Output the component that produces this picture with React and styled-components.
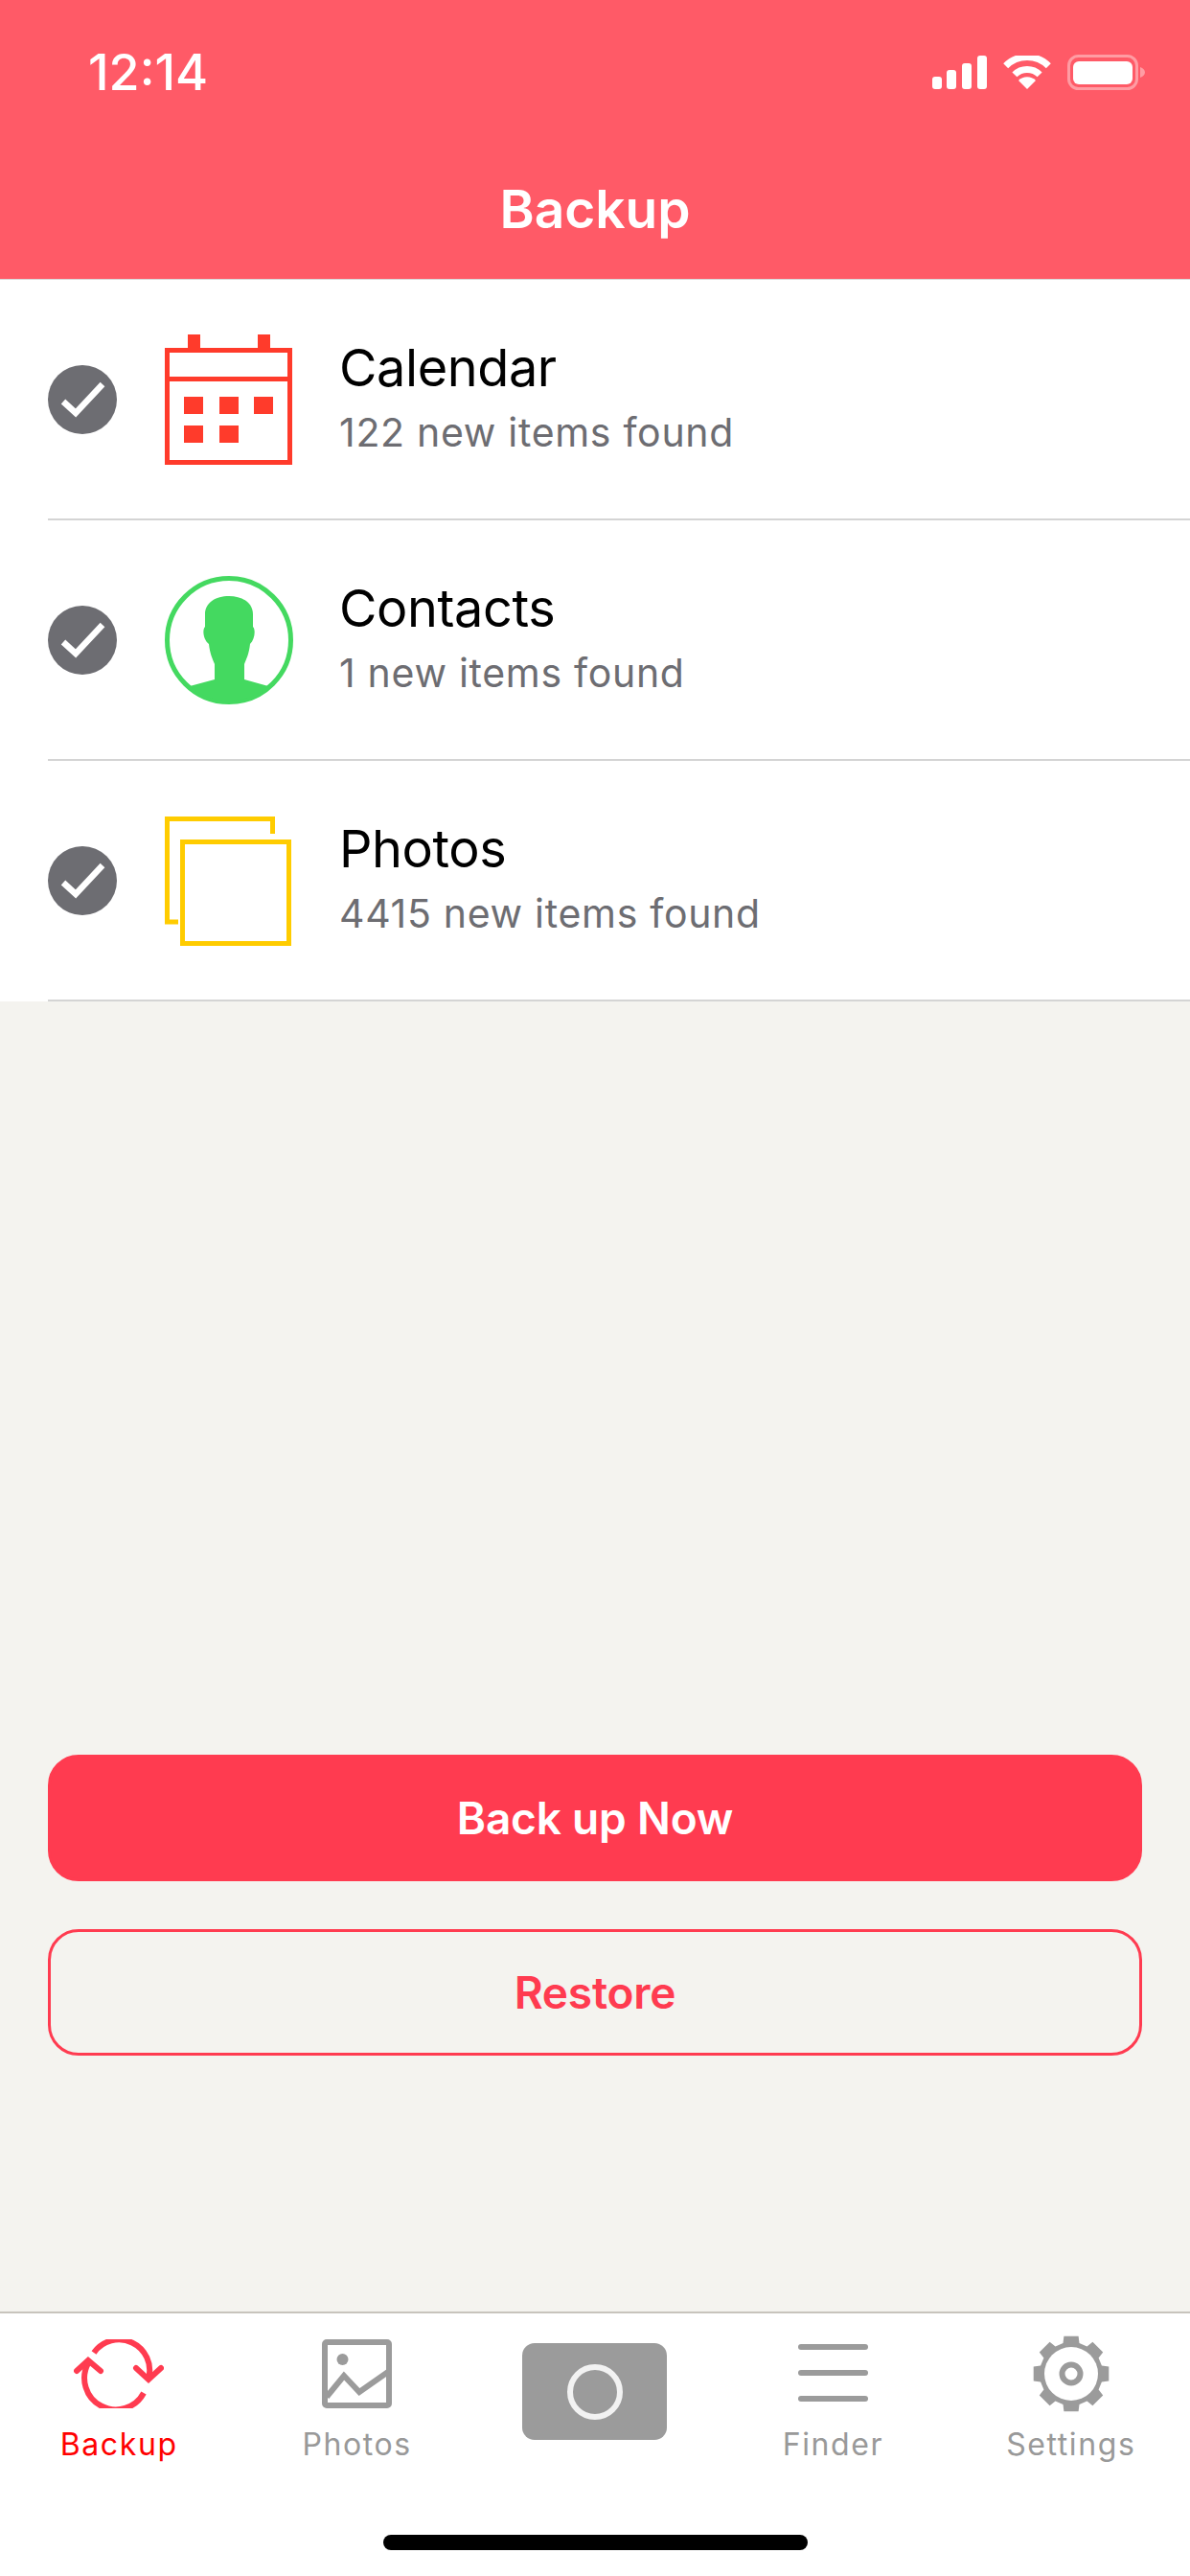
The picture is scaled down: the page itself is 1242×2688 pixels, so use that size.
import React from 'react';
import styled, {createGlobalStyle} from 'styled-components';

const colors = {
  header: '#ff5a67',
  accent: '#ff3b50',
  page: '#f4f3ef',
  line: '#d4d4d4',
  grey: '#6d6d72',
  tab: '#9b9b9b',
};

const GlobalStyle = createGlobalStyle`
  html, body {
    margin: 0;
    padding: 0;
    background: #fff;
  }
  * {
    box-sizing: border-box;
  }
`;

const Screen = styled.div`
  width: 1242px;
  height: 2688px;
  display: flex;
  flex-direction: column;
  overflow: hidden;
  background: ${colors.page};
  font-family: Inter, "Liberation Sans", sans-serif;
`;

const Header = styled.header`
  height: 292px;
  padding-top: 57px;
  background: ${colors.header};
  border-bottom: 1px solid #d8d8d8;
  color: #fff;
`;

const StatusBar = styled.div`
  height: 37px;
  padding: 0 47px 0 92px;
  display: flex;
  align-items: center;
  justify-content: space-between;
`;

const Clock = styled.div`
  font-size: 52px;
  font-weight: 500;
  line-height: 37px;
`;

const StatusIcons = styled.div`
  display: flex;
  align-items: center;
  gap: 17px;
`;

const Title = styled.h1`
  margin: 94px 0 0;
  font-size: 55px;
  font-weight: 600;
  line-height: 60px;
  text-align: center;
`;

const List = styled.div`
  background: #fff;
`;

const Row = styled.div`
  height: 251px;
  padding-left: 50px;
`;

const RowInner = styled.div`
  height: 100%;
  display: flex;
  align-items: center;
  gap: 50px;
  border-bottom: 2px solid ${colors.line};
`;

const Check = styled.svg`
  width: 72px;
  height: 72px;
  flex: none;
`;

const RowIcon = styled.svg`
  width: 134px;
  height: 140px;
  flex: none;
`;

const RowText = styled.div`
  margin-left: -2px;
`;

const RowTitle = styled.div`
  padding-top: 1px;
  font-size: 54px;
  line-height: 68px;
  color: #000;
  letter-spacing: -0.4px;
`;

const RowSub = styled.div`
  font-size: 41px;
  line-height: 67px;
  color: ${colors.grey};
  letter-spacing: 0.7px;
`;

const Actions = styled.div`
  margin-top: auto;
  padding: 0 50px 267px;
  display: flex;
  flex-direction: column;
  gap: 50px;
`;

const Button = styled.button`
  height: 132px;
  width: 100%;
  border-radius: 32px;
  border: 3px solid ${colors.accent};
  background: ${p => (p.$outline ? 'transparent' : colors.accent)};
  color: ${p => (p.$outline ? colors.accent : '#fff')};
  font-family: inherit;
  font-size: 46px;
  font-weight: 600;
  letter-spacing: -0.2px;
`;

const TabBar = styled.nav`
  height: 276px;
  padding-top: 19px;
  background: #fff;
  border-top: 2px solid #c8c4bd;
  display: flex;
  flex-direction: column;
`;

const Tabs = styled.div`
  display: grid;
  grid-template-columns: repeat(5, 1fr);
  height: 138px;
`;

const Tab = styled.div`
  display: flex;
  flex-direction: column;
  align-items: center;
  color: ${p => (p.$active ? '#ff0000' : '#999')};
`;

const TabIcon = styled.div`
  height: 88px;
  display: flex;
  align-items: center;
  justify-content: center;
`;

const TabLabel = styled.div`
  margin-top: 10px;
  font-size: 32px;
  line-height: 40px;
  letter-spacing: 1.6px;
`;

const CameraButton = styled.div`
  width: 151px;
  height: 101px;
  margin-top: 12px;
  border-radius: 13px;
  background: ${colors.tab};
  display: flex;
  align-items: center;
  justify-content: center;
`;

const CameraRing = styled.div`
  width: 58px;
  height: 58px;
  border-radius: 50%;
  border: 6px solid #f2f2f2;
`;

const HomeIndicator = styled.div`
  width: 443px;
  height: 16px;
  margin: 74px auto 0;
  border-radius: 8px;
  background: #000;
`;

const SignalIcon = () => (
  <svg width="57" height="35" viewBox="0 0 57 35" fill="#fff">
    <rect x="0" y="22" width="10" height="13" rx="3" />
    <rect x="15" y="15" width="10" height="20" rx="3" />
    <rect x="31" y="8" width="10" height="27" rx="3" />
    <rect x="47" y="0" width="10" height="35" rx="3" />
  </svg>
);

const WifiIcon = () => (
  <svg width="50" height="36" viewBox="0 0 50 36" fill="none" stroke="#fff" strokeWidth="7">
    <path d="M2.7 10.7A31.5 31.5 0 0 1 47.3 10.7" />
    <path d="M11.9 19.9A18.5 18.5 0 0 1 38.1 19.9" />
    <path d="M25 35L16 26A12.7 12.7 0 0 1 34 26Z" fill="#fff" stroke="none" />
  </svg>
);

const BatteryIcon = () => (
  <svg width="81" height="37" viewBox="0 0 81 37">
    <rect x="1.5" y="1.5" width="71" height="34" rx="10" fill="none" stroke="#fff" strokeOpacity="0.4" strokeWidth="3" />
    <rect x="6" y="7" width="62" height="24" rx="6" fill="#fff" />
    <path d="M76 13C79 14 81 16 81 18.5C81 21 79 23 76 24Z" fill="#fff" fillOpacity="0.4" />
  </svg>
);

const CheckIcon = () => (
  <Check viewBox="0 0 72 72">
    <circle cx="36" cy="36" r="36" fill={colors.grey} />
    <path d="M16 38L29 50L57 20" fill="none" stroke="#fff" strokeWidth="6.5" />
  </Check>
);

const CalendarIcon = () => (
  <RowIcon viewBox="0 0 134 140" fill="#ff3b2b">
    <rect x="24" y="2" width="13" height="18" />
    <rect x="97" y="2" width="13" height="18" />
    <rect x="2.5" y="18.5" width="128" height="117" fill="none" stroke="#ff3b2b" strokeWidth="5" />
    <rect x="2" y="46" width="129" height="5" />
    <rect x="20" y="67" width="20" height="18" />
    <rect x="57" y="67" width="20" height="18" />
    <rect x="93" y="67" width="20" height="18" />
    <rect x="20" y="97" width="20" height="18" />
    <rect x="57" y="97" width="20" height="18" />
  </RowIcon>
);

const ContactsIcon = () => (
  <RowIcon viewBox="0 -3 134 140" fill="#44d960">
    <circle cx="67" cy="67" r="64.5" fill="none" stroke="#44d960" strokeWidth="5" />
    <path d="M42 40C42 28 53 21 67 21C81 21 92 28 92 40L92 53C95 56 94 66 89 71C88 81 85 87 83 92L83 108L108 115A63 63 0 0 1 26 115L52 108L52 92C50 87 47 81 46 71C40 66 39 56 42 53Z" />
  </RowIcon>
);

const PhotosIcon = () => (
  <RowIcon viewBox="0 0 134 140" fill="none" stroke="#ffcc00" strokeWidth="5">
    <path d="M112.5 21V5.5H2.5V113H14" />
    <rect x="18.5" y="29.5" width="111" height="106" />
  </RowIcon>
);

const BackupIcon = () => (
  <svg width="94" height="72" viewBox="0 0 94 72" fill="none" stroke={colors.accent} strokeWidth="6" strokeLinecap="round">
    <path d="M21 14A32 32 0 0 1 78 41" strokeLinecap="butt" />
    <path d="M73 56A32 32 0 0 1 15 25" strokeLinecap="butt" />
    <path d="M3 33L15 22L28 33" />
    <path d="M65 30L78 42L91 30" />
  </svg>
);

const PhotoTabIcon = () => (
  <svg width="73" height="72" viewBox="0 0 73 72" fill="none" stroke={colors.tab} strokeWidth="6">
    <rect x="3" y="3" width="67" height="66" rx="2" />
    <circle cx="21.5" cy="21" r="6" fill={colors.tab} stroke="none" />
    <path d="M5 60L23 38L39 55L69 34" />
  </svg>
);

const FinderIcon = () => (
  <svg width="73" height="62" viewBox="0 0 73 62" fill={colors.tab}>
    <rect x="0" y="0" width="73" height="6" rx="3" />
    <rect x="0" y="27" width="73" height="6" rx="3" />
    <rect x="0" y="54" width="73" height="6" rx="3" />
  </svg>
);

// eight teeth, one of them pointing straight up
const gearPath = () => {
  const point = (r, angle) => {
    const a = angle * Math.PI / 180;
    return `${(40 + r * Math.sin(a)).toFixed(1)} ${(40 - r * Math.cos(a)).toFixed(1)}`;
  };
  let d = '';
  for (let i = 0; i < 8; i++) {
    const c = i * 45;
    d += `${i ? 'L' : 'M'}${point(33, c - 15)}L${point(40, c - 11)}L${point(40, c + 11)}L${point(33, c + 15)}`;
  }
  return d + 'Z';
};

const SettingsIcon = () => (
  <svg width="80" height="80" viewBox="0 0 80 80">
    <path d={gearPath()} fill={colors.tab} />
    <circle cx="40" cy="40" r="28" fill="#fff" />
    <circle cx="40" cy="40" r="9.5" fill="none" stroke={colors.tab} strokeWidth="6" />
  </svg>
);

const items = [
  {name: 'Calendar', sub: '122 new items found', Icon: CalendarIcon},
  {name: 'Contacts', sub: '1 new items found', Icon: ContactsIcon},
  {name: 'Photos', sub: '4415 new items found', Icon: PhotosIcon},
];

export default function App() {
  return (
    <Screen>
      <GlobalStyle />
      <Header>
        <StatusBar>
          <Clock>12:14</Clock>
          <StatusIcons>
            <SignalIcon />
            <WifiIcon />
            <BatteryIcon />
          </StatusIcons>
        </StatusBar>
        <Title>Backup</Title>
      </Header>
      <List>
        {items.map(({name, sub, Icon}) => (
          <Row key={name}>
            <RowInner>
              <CheckIcon />
              <Icon />
              <RowText>
                <RowTitle>{name}</RowTitle>
                <RowSub>{sub}</RowSub>
              </RowText>
            </RowInner>
          </Row>
        ))}
      </List>
      <Actions>
        <Button>Back up Now</Button>
        <Button $outline>Restore</Button>
      </Actions>
      <TabBar>
        <Tabs>
          <Tab $active>
            <TabIcon><BackupIcon /></TabIcon>
            <TabLabel>Backup</TabLabel>
          </Tab>
          <Tab>
            <TabIcon><PhotoTabIcon /></TabIcon>
            <TabLabel>Photos</TabLabel>
          </Tab>
          <Tab>
            <CameraButton><CameraRing /></CameraButton>
          </Tab>
          <Tab>
            <TabIcon><FinderIcon /></TabIcon>
            <TabLabel>Finder</TabLabel>
          </Tab>
          <Tab>
            <TabIcon><SettingsIcon /></TabIcon>
            <TabLabel>Settings</TabLabel>
          </Tab>
        </Tabs>
        <HomeIndicator />
      </TabBar>
    </Screen>
  );
}
